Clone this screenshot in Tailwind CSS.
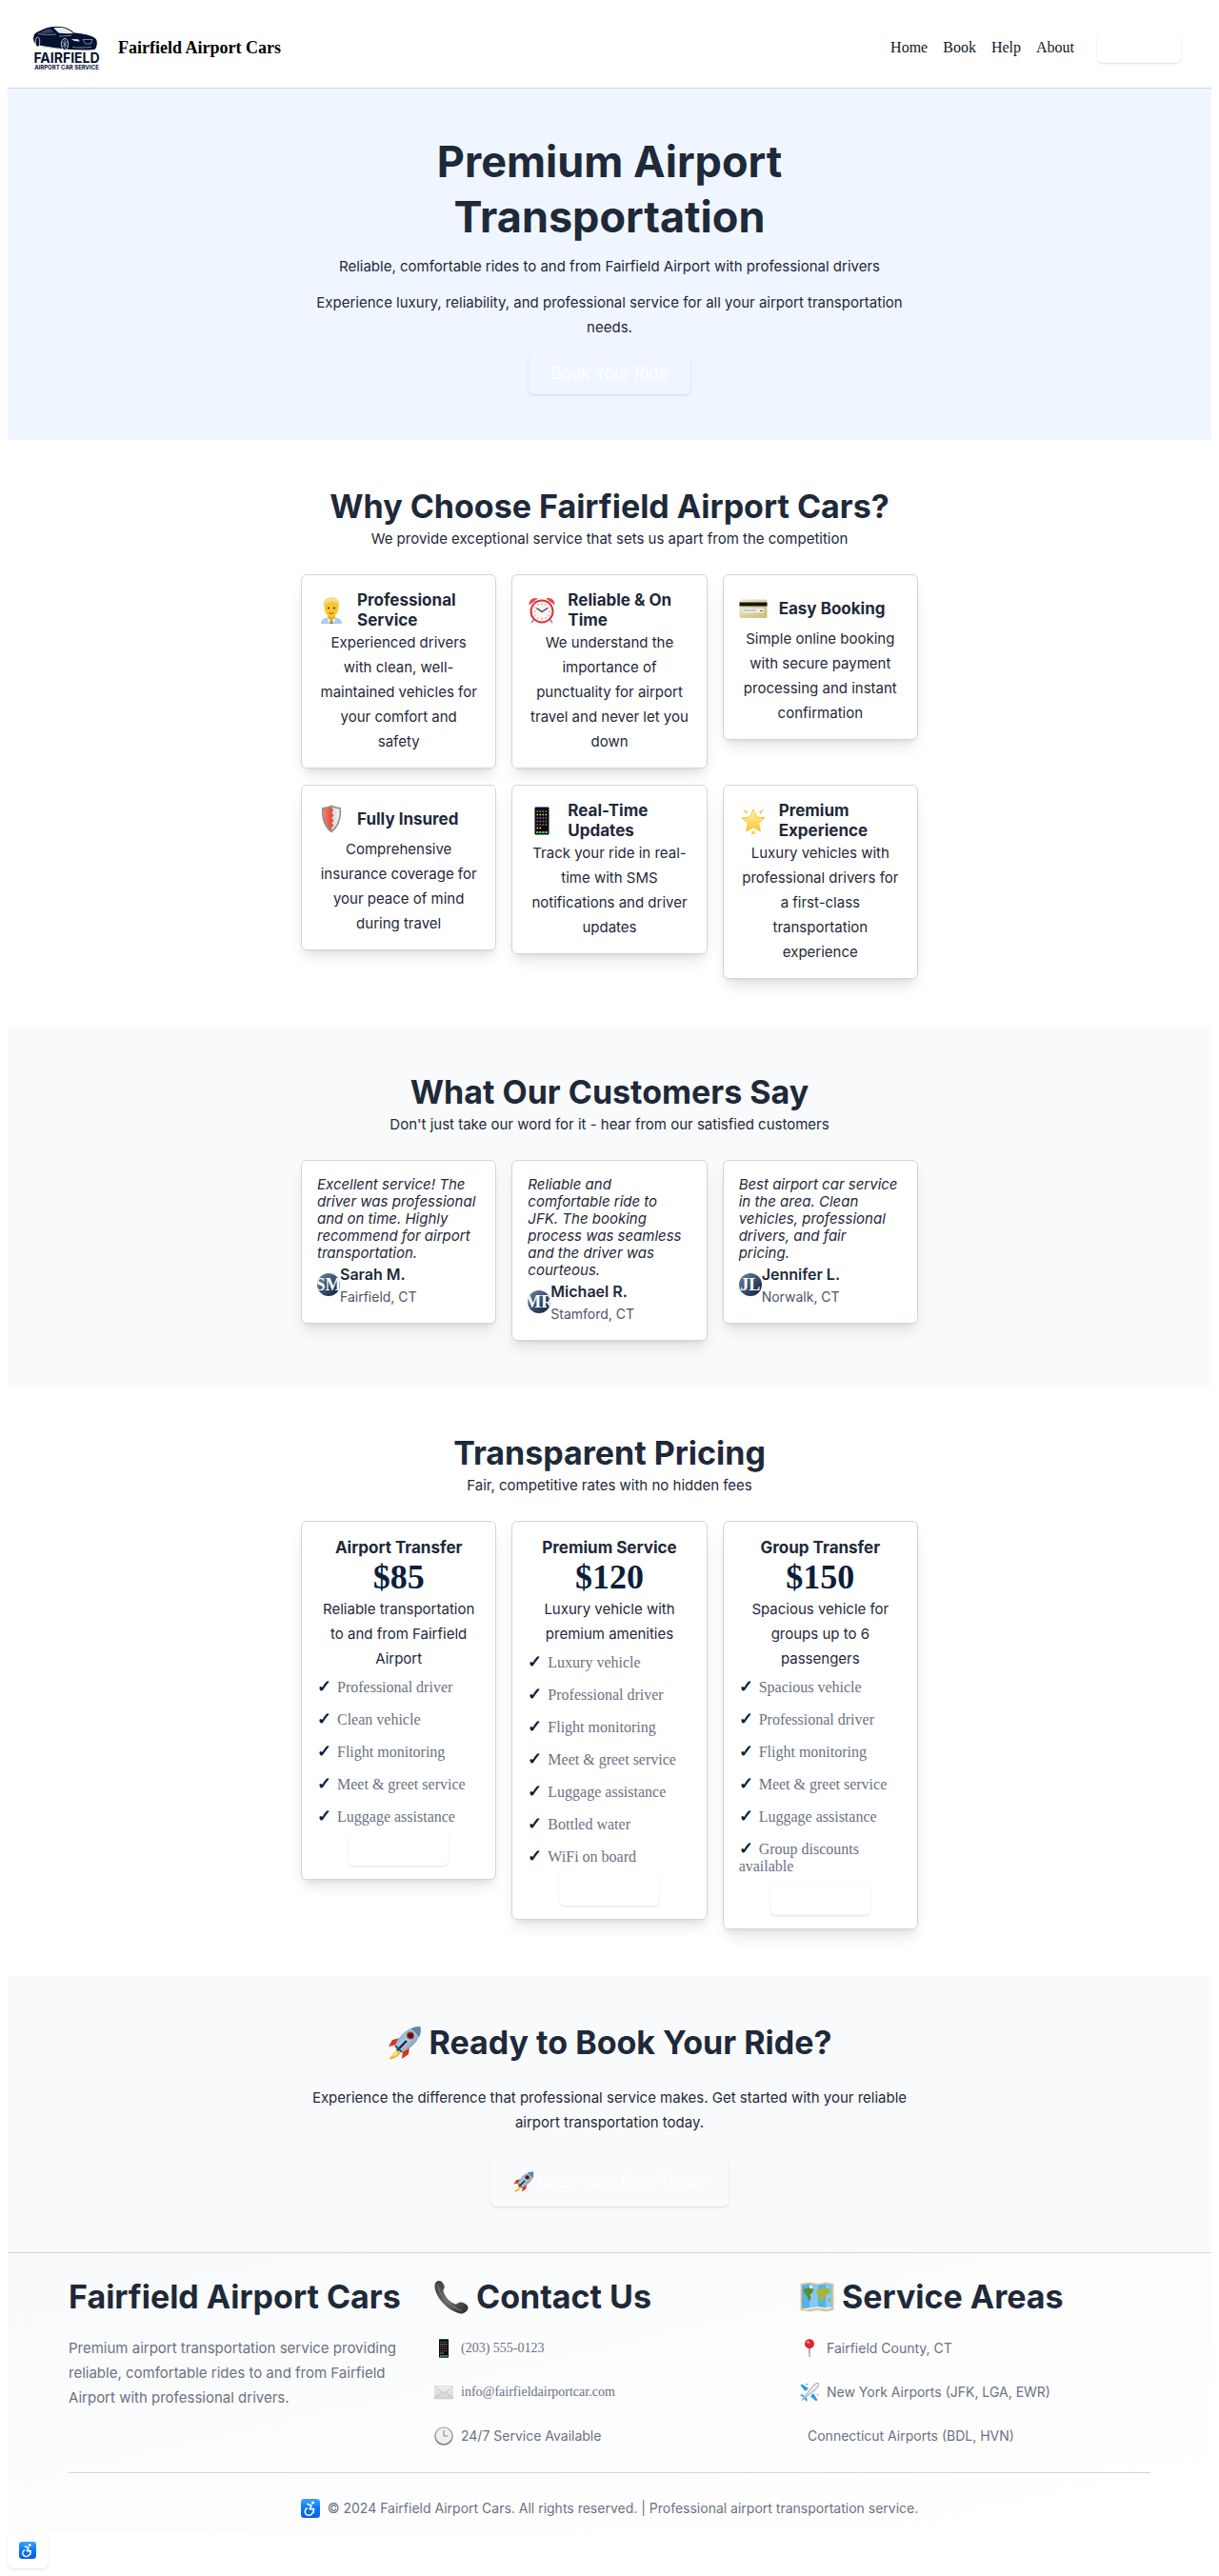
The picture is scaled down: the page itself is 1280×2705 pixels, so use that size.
<!DOCTYPE html>
<html lang="en">
<head>
<meta charset="utf-8">
<meta name="viewport" content="width=device-width, initial-scale=1">
<title>Fairfield Airport Cars</title>
<script src="https://cdn.jsdelivr.net/npm/@tailwindcss/browser@4"></script>
</head>
<body class="bg-white p-2 font-['Inter',sans-serif] text-[15px] leading-[26px] text-gray-800">

<!-- Shared icon symbols -->
<svg class="absolute size-0" aria-hidden="true">
  <defs>
    <linearGradient id="gold" x1="0" y1="0" x2="1" y2="1"><stop offset="0" stop-color="#efe9c0"/><stop offset="1" stop-color="#c9bd7c"/></linearGradient>
    <linearGradient id="steel" x1="0" y1="0" x2="1" y2="0"><stop offset="0" stop-color="#cfd3d5"/><stop offset="1" stop-color="#f4f6f6"/></linearGradient>
    <linearGradient id="redside" x1="0" y1="0" x2="1" y2="0"><stop offset="0" stop-color="#f47f6d"/><stop offset="1" stop-color="#d8412f"/></linearGradient>
    <linearGradient id="paper" x1="0" y1="0" x2="0" y2="1"><stop offset="0" stop-color="#f4f4f4"/><stop offset="1" stop-color="#d2d2d2"/></linearGradient>
    <linearGradient id="rim" x1="0" y1="0" x2="0" y2="1"><stop offset="0" stop-color="#b8bcbf"/><stop offset="1" stop-color="#77797b"/></linearGradient>
    <linearGradient id="blue" x1="0" y1="0" x2="0" y2="1"><stop offset="0" stop-color="#3fa2ff"/><stop offset="0.5" stop-color="#0a78f5"/><stop offset="1" stop-color="#0b5fe0"/></linearGradient>
    <linearGradient id="starfill" x1="0" y1="0" x2="0" y2="1"><stop offset="0" stop-color="#fff6b0"/><stop offset="1" stop-color="#fcc42c"/></linearGradient>
    <linearGradient id="handset" x1="0" y1="0" x2="1" y2="1"><stop offset="0" stop-color="#3a3a3a"/><stop offset="0.5" stop-color="#6a6a6a"/><stop offset="1" stop-color="#262626"/></linearGradient>
    <linearGradient id="hull" x1="0" y1="0" x2="1" y2="1"><stop offset="0" stop-color="#4b93cf"/><stop offset="0.5" stop-color="#b5d0e6"/><stop offset="1" stop-color="#4c5b6b"/></linearGradient>
    <symbol id="i-person" viewBox="0 0 30 30">
      <path d="M4 29c0-4 3-6 7-6.500h8c4 .5 7 2.500 7 6.500z" fill="#a9cdea"/>
      <path d="M11 22.500l4 3.500 4-3.500v-3h-8z" fill="#e8a91c"/>
      <path d="M10.500 22l4.500 4.500-3 1.500zM19.500 22L15 26.500l3 1.500z" fill="#e3f0fa"/>
      <path d="M14 25.500h2l.8 3.500h-3.600z" fill="#b98436"/>
      <path d="M7.500 11c0-5 3-8 7.500-8s7.500 3 7.500 8c0 6-3 11-7.500 11S7.500 17 7.500 11z" fill="#fbc52f"/>
      <path d="M6.500 12C5.500 5 9 1 15 1s9.500 4 8.500 11l-1.500-4c-3-2.500-11-2.500-14 0z" fill="#f3dc8c"/>
      <circle cx="12" cy="12.500" r="1.100" fill="#54371b"/><circle cx="18" cy="12.500" r="1.100" fill="#54371b"/>
      <path d="M12.500 17.500q2.500 1.700 5 0" stroke="#a2491d" fill="none"/>
    </symbol>
    <symbol id="i-alarm" viewBox="0 0 30 30">
      <path d="M7 24l-3 4M23 24l3 4" stroke="#8b8b8b" stroke-width="1.600"/>
      <path d="M1.500 9.500C1 4 6 .5 11 2.500zM28.500 9.500C29 4 24 .5 19 2.500z" fill="#e04a4f"/>
      <circle cx="15" cy="16" r="12.500" fill="#d5353c"/><circle cx="15" cy="16" r="10.500" fill="#f7f5f4"/>
      <path d="M15 7v2.500M15 22.500V25M6 16h2.500M21.500 16H24M10.500 8.200l1 1.800M19.500 8.200l-1 1.800M10.500 23.800l1-1.800M19.500 23.800l-1-1.800M7.200 11.500l1.800 1M22.800 11.500l-1.800 1M7.200 20.500l1.800-1M22.800 20.500l-1.800-1" stroke="#e88b8b" stroke-width=".9"/>
      <path d="M9.500 12.500L15 16.500l6-4" stroke="#333" stroke-width="1.200" fill="none"/>
    </symbol>
    <symbol id="i-card" viewBox="0 0 30 30">
      <rect x=".5" y="5.500" width="29" height="19.500" rx="1.500" fill="url(#gold)"/>
      <rect x=".5" y="8.500" width="29" height="4" fill="#151515"/>
      <rect x="3" y="15" width="23" height="4.500" fill="#f1efe2"/>
      <path d="M4.500 17.800l1.500-1.500 1 1.500 2-1.500 1 1.500 2-1.500 1 1 2-1 1 1.500 2-1.500" stroke="#6c8bd0" stroke-width=".8" fill="none"/>
      <path d="M22 17.500h3" stroke="#555"/>
    </symbol>
    <symbol id="i-shield" viewBox="0 0 30 30">
      <path d="M15 .5c4 1.500 7 2.200 10 2.500 1 11-2 21-10 26.500C7 24 4 14 5 3c3-.3 6-1 10-2.500z" fill="#8e9698"/>
      <path d="M15 2.500c3 1.200 5.500 1.700 8.300 2C24 14 21.500 22 15 27z" fill="url(#steel)"/>
      <path d="M15 2.500C12 3.700 9.500 4.200 6.700 4.500 6 14 8.500 22 15 27v-3l2.500-2.500L15 19.500l2.500-3L15 14l2.500-3L15 8.500 17 6z" fill="url(#redside)"/>
    </symbol>
    <symbol id="i-phone" viewBox="0 0 30 30">
      <rect x="7.500" y=".5" width="15" height="29" rx="1" fill="#0b0b0b"/>
      <path d="M9.500 5h11" stroke="#44b3c9" stroke-width="1.600" stroke-dasharray="1.600 1.400"/>
      <path d="M9.500 8.500h11" stroke="#e9dc6a" stroke-width="1.600" stroke-dasharray="1.600 1.400"/>
      <path d="M9.500 12h11" stroke="#d04fb1" stroke-width="1.600" stroke-dasharray="1.600 1.400"/>
      <path d="M9.500 15.500h11" stroke="#4f86e0" stroke-width="1.600" stroke-dasharray="1.600 1.400"/>
      <path d="M9.500 19h11" stroke="#d9693f" stroke-width="1.600" stroke-dasharray="1.600 1.400"/>
      <path d="M9.500 22.500h5" stroke="#e8e8e8" stroke-width="1.600" stroke-dasharray="1.600 1.400"/>
      <path d="M9 27h12" stroke="#4fd66b" stroke-width="2.200" stroke-dasharray="2.300 .9"/>
    </symbol>
    <symbol id="i-star" viewBox="0 0 30 30">
      <path d="M15 3l3.500 8 8.500.8-6.500 5.700 2 8.500-7.500-4.500L7.500 26l2-8.500L3 11.800l8.500-.8z" fill="url(#starfill)" stroke="#f5b81f" stroke-width=".8" stroke-linejoin="round"/>
      <path d="M4 3l5 2-1.500 3zM26 3l-5 2 1.500 3zM15 24.500l2.500 4.500h-5z" fill="#fbc845"/>
    </symbol>
    <symbol id="i-rocket" viewBox="0 0 36 36">
      <path d="M10 25L1.500 35c5 0 9-2 11.500-6z" fill="#f8a51b"/><path d="M9 27l-5 6c4-.5 6-2 7-4z" fill="#fdee6a"/>
      <path d="M14 13L5 15 1 22l9-2zM23 22l-1 8-7 5 1-9z" fill="#e52d18"/>
      <path d="M9 27L8 20C13 9 22 1 34.500 1 36 12 28 22 16 28z" fill="url(#hull)"/>
      <path d="M34.500 1c-4 0-7 .8-10 2l9 9c1-3.500 1.400-7 1-11z" fill="#5f86a8"/>
      <circle cx="24" cy="10.500" r="4" fill="#c8261d"/><circle cx="24" cy="10.500" r="2.600" fill="#20262e"/>
      <path d="M10 26L20 16" stroke="#1c2530" stroke-width="2.400"/>
      <path d="M8 21l7 7" stroke="#47525e" stroke-width="2"/>
    </symbol>
    <symbol id="i-handset" viewBox="0 0 36 36">
      <path d="M3 1.500C6 0 9 2 10.500 6c1 3-1.500 4-1 6 1.500 6 7 11.500 12.500 13.500 2 .5 3.500-2.500 6-2 4 .7 8 3 7.500 6-.5 3.500-4 6-7.500 6C16 34 1 19 .5 7 .4 4.500 1 2.500 3 1.500z" fill="url(#handset)"/>
      <path d="M3.500 5C5 15 15 28 29 32.500" stroke="#a5a5a5" stroke-width="1" fill="none" opacity=".6"/>
    </symbol>
    <symbol id="i-map" viewBox="0 0 36 36">
      <path d="M.5 4L10 2.500l9 1.500 8-1.500L35.500 4v28L27 33.500 19 32l-9 1.500L.5 32z" fill="#e0c49a"/>
      <path d="M2 5.500l8-1.200 9 1.500 8-1.500 7 1.200v24l-7 1.500-8-1.500-9 1.500-8-1.500z" fill="#55b2e6"/>
      <path d="M10 4.300l9 1.500v23.700l-9 1.500zM27 4.300l7 1.200v24L27 31z" fill="#84c9ef"/>
      <path d="M3.500 10l6-2 5 2-2 4-2 1 1 4-1.500 4-2-5-3-4z" fill="#5d8a2c"/>
      <path d="M17.500 11l5-2.500 8 .5 2 3-4 4-3 1-1.500 6-3-1-1-5-2.500-1z" fill="#a9b53a"/>
      <path d="M29 20l3-.5.5 2.500-2.500 1z" fill="#e29a35"/><path d="M10 6l3 .2v3l-3-.5z" fill="#eaf2f5"/>
      <path d="M4 31l6-1 9-1 8 1 6-1" stroke="#f2f2ec" stroke-width="1.500" fill="none"/>
    </symbol>
    <symbol id="i-mail" viewBox="0 0 20 20">
      <rect x=".4" y="3.500" width="19.200" height="13.500" rx=".6" fill="url(#paper)" stroke="#cfcfcf" stroke-width=".6"/>
      <path d="M.8 4l9.200 8 9.200-8M1 16.500L7.500 10M19 16.500L12.500 10" stroke="#b2b2b2" stroke-width=".8" fill="none"/>
    </symbol>
    <symbol id="i-clock" viewBox="0 0 20 20">
      <circle cx="10" cy="10" r="9.800" fill="url(#rim)"/><circle cx="10" cy="10" r="8.300" fill="#f1f1f0"/>
      <path d="M10 4v6h4.500" stroke="#8a8a8a" stroke-width="1.100" fill="none"/>
    </symbol>
    <symbol id="i-pin" viewBox="0 0 20 20">
      <path d="M9.300 8h1.400l-.3 11h-.8z" fill="#8a6f66"/><circle cx="10" cy="5.300" r="5" fill="#e0262c"/><circle cx="8.600" cy="3.600" r="1.500" fill="#ff8d8a"/>
    </symbol>
    <symbol id="i-plane" viewBox="0 0 20 20">
      <path d="M9 6L2 1.500.5 3l5 6zM14 11l4.500 7-1.500 1.500-6-5zM4.500 13l-3.500-.8-.8.900 3 2.500zM7 15.500l.8 3.500-.9.800-2.500-3z" fill="#2f9fe0"/>
      <path d="M2 18.500L13.500 3.500C15.500 1.200 18.500 0 19.500.5s0 3.500-2.500 6z" fill="#e9edf0" stroke="#7c868e" stroke-width=".8"/>
      <path d="M6 2l1.500-1 1 1.500zM18 13l1-1.500.3 2z" fill="#54616b"/>
    </symbol>
    <symbol id="i-access" viewBox="0 0 20 20">
      <rect width="20" height="20" rx="3.500" fill="url(#blue)"/>
      <circle cx="12.500" cy="4" r="1.600" fill="#fff"/>
      <path d="M7 5.500l4 1.500-1.800 3.700h4.300l-.5 4" stroke="#fff" stroke-width="1.700" fill="none" stroke-linejoin="round" stroke-linecap="round"/>
      <path d="M6.300 9.800a4 4 0 1 0 5.500 5.300" stroke="#fff" stroke-width="1.500" fill="none" stroke-linecap="round"/>
    </symbol>
  </defs>
</svg>

<header class="flex items-center justify-between border-b border-gray-300 bg-white px-6 py-[18px] pr-8">
  <a href="#" class="flex items-center gap-4">
    <svg class="h-12 w-[76px]" viewBox="0 0 76 48" role="img" aria-label="Fairfield Airport Car Service">
      <path d="M4 10C7 7 11 6 14 4.500 19 2 24 1.800 31 2c6 .3 10 2.500 15 6.500 9 .8 17 2.500 21 5 2.500 1.500 3 3.500 2.800 6.500-.2 3-1.300 5-2 5.700-8 1.300-18 .8-27 .3-9-.8-20-2.500-31.500-4.500C4.500 21 3 17 3 14z" fill="#04122f"/>
      <path d="M24 3.500c5-.7 11-.5 14 1 3 1.200 5.500 3 7 4.500-5 .3-10 .3-15-.2-2-1.800-3.500-3.500-6-5.300z" fill="#e6ebef"/>
      <path d="M10 8.500c3-2.500 7-4 11-4.600l4 4.400c-5 .6-10 .6-15 .2z" fill="#33435f"/>
      <path d="M8 9.500c6 1 13 1.200 19 .5M30 12c5 0 9-.3 13-.8M12 23l18 2.300M44 23.500c6 .8 14 .8 20-.3" stroke="#aab4c4" stroke-width=".7" fill="none"/>
      <path d="M43 15l7 .3 2 2.200-6-.5zM40 12.500l3 3" fill="#dfe5ec"/>
      <path d="M55 15.500h10l-1.500 4.500h-6z" fill="none" stroke="#aab4c4" stroke-width=".7"/>
      <ellipse cx="36" cy="20.500" rx="3.600" ry="6" fill="#04122f" stroke="#dfe5ec" stroke-width=".9"/>
      <path d="M36 16v9M33.500 18l5 5M38.500 18l-5 5" stroke="#dfe5ec" stroke-width=".7"/>
      <ellipse cx="7.500" cy="18" rx="2.200" ry="5" fill="#04122f" stroke="#dfe5ec" stroke-width=".8"/>
      <text x="38" y="40" text-anchor="middle" font-family="Inter, sans-serif" font-weight="700" font-size="14" fill="#04122f">FAIRFIELD</text>
      <text x="38" y="47" text-anchor="middle" font-family="Inter, sans-serif" font-weight="700" font-size="6" fill="#04122f">AIRPORT CAR SERVICE</text>
    </svg>
    <span class="font-['Liberation_Serif',serif] text-lg font-bold text-black">Fairfield Airport Cars</span>
  </a>
  <nav class="flex items-center gap-4 font-['Liberation_Serif',serif] text-base text-gray-900">
    <a href="#">Home</a>
    <a href="#">Book</a>
    <a href="#">Help</a>
    <a href="#">About</a>
    <button class="ml-2 h-8 w-[88px] rounded-md bg-white font-['Inter',sans-serif] text-sm text-white shadow-sm">Book Now</button>
  </nav>
</header>

<main>
  <section class="bg-[#eff6ff] px-4 py-12 text-center">
    <div class="mx-auto max-w-[648px]">
      <h1 class="text-[45px] leading-[58px] font-bold">Premium Airport Transportation</h1>
      <p class="mt-2.5">Reliable, comfortable rides to and from Fairfield Airport with professional drivers</p>
      <p class="mt-3">Experience luxury, reliability, and professional service for all your airport transportation needs.</p>
      <button class="mt-3 h-[45px] rounded-md px-6 text-[17px] text-white shadow-sm">Book Your Ride</button>
    </div>
  </section>

  <section class="px-4 pt-12 pb-[49px]">
    <div class="mx-auto max-w-[648px]">
      <h2 class="text-center text-[34px] leading-[43px] font-bold">Why Choose Fairfield Airport Cars?</h2>
      <p class="text-center">We provide exceptional service that sets us apart from the competition</p>
      <div class="mt-6 grid grid-cols-3 items-start gap-x-4 gap-y-[17px]">
        <article class="rounded-md border border-gray-300 bg-white px-4 pt-4 pb-3.5 text-center shadow-lg">
          <div class="flex min-h-[38px] items-center gap-3 text-left">
            <svg class="size-[30px] shrink-0" aria-hidden="true"><use href="#i-person"/></svg>
            <h3 class="text-[17px] leading-[21px] font-bold">Professional Service</h3>
          </div>
          <p>Experienced drivers with clean, well-maintained vehicles for your comfort and<br>safety</p>
        </article>
        <article class="rounded-md border border-gray-300 bg-white px-4 pt-4 pb-3.5 text-center shadow-lg">
          <div class="flex min-h-[38px] items-center gap-3 text-left">
            <svg class="size-[30px] shrink-0" aria-hidden="true"><use href="#i-alarm"/></svg>
            <h3 class="text-[17px] leading-[21px] font-bold">Reliable &amp; On<br>Time</h3>
          </div>
          <p>We understand the importance of punctuality for airport travel and never let you down</p>
        </article>
        <article class="rounded-md border border-gray-300 bg-white px-4 pt-4 pb-3.5 text-center shadow-lg">
          <div class="flex min-h-[38px] items-center gap-3 text-left">
            <svg class="size-[30px] shrink-0" aria-hidden="true"><use href="#i-card"/></svg>
            <h3 class="text-[17px] leading-[21px] font-bold">Easy Booking</h3>
          </div>
          <p>Simple online booking with secure payment processing and instant confirmation</p>
        </article>
        <article class="rounded-md border border-gray-300 bg-white px-4 pt-4 pb-3.5 text-center shadow-lg">
          <div class="flex min-h-[38px] items-center gap-3 text-left">
            <svg class="size-[30px] shrink-0" aria-hidden="true"><use href="#i-shield"/></svg>
            <h3 class="text-[17px] leading-[21px] font-bold">Fully Insured</h3>
          </div>
          <p>Comprehensive insurance coverage for your peace of mind during travel</p>
        </article>
        <article class="rounded-md border border-gray-300 bg-white px-4 pt-4 pb-3.5 text-center shadow-lg">
          <div class="flex min-h-[38px] items-center gap-3 text-left">
            <svg class="size-[30px] shrink-0" aria-hidden="true"><use href="#i-phone"/></svg>
            <h3 class="text-[17px] leading-[21px] font-bold">Real-Time Updates</h3>
          </div>
          <p>Track your ride in real-time with SMS notifications and driver updates</p>
        </article>
        <article class="rounded-md border border-gray-300 bg-white px-4 pt-4 pb-3.5 text-center shadow-lg">
          <div class="flex min-h-[38px] items-center gap-3 text-left">
            <svg class="size-[30px] shrink-0" aria-hidden="true"><use href="#i-star"/></svg>
            <h3 class="text-[17px] leading-[21px] font-bold">Premium Experience</h3>
          </div>
          <p>Luxury vehicles with professional drivers for a first-class transportation experience</p>
        </article>
      </div>
    </div>
  </section>

  <section class="bg-[#f9fafb] px-4 py-12">
    <div class="mx-auto max-w-[648px]">
      <h2 class="text-center text-[34px] leading-[43px] font-bold">What Our Customers Say</h2>
      <p class="text-center">Don't just take our word for it - hear from our satisfied customers</p>
      <div class="mt-6 grid grid-cols-3 items-start gap-4">
        <article class="rounded-md border border-gray-300 bg-white p-4 shadow-lg">
          <blockquote class="leading-[18px] italic">Excellent service! The driver was professional and on time. Highly recommend for airport transportation.</blockquote>
          <div class="flex items-center">
            <span class="flex size-6 items-center justify-center overflow-hidden rounded-full bg-linear-to-br from-[#6f89a8] to-[#0b1f3a] font-['Liberation_Serif',serif] text-lg font-semibold text-white">SM</span>
            <div>
              <p class="text-base leading-[26px] font-semibold">Sarah M.</p>
              <p class="text-sm leading-[22px] text-gray-600">Fairfield, CT</p>
            </div>
          </div>
        </article>
        <article class="rounded-md border border-gray-300 bg-white p-4 shadow-lg">
          <blockquote class="leading-[18px] italic">Reliable and comfortable ride to JFK. The booking process was seamless and the driver was courteous.</blockquote>
          <div class="flex items-center">
            <span class="flex size-6 items-center justify-center overflow-hidden rounded-full bg-linear-to-br from-[#6f89a8] to-[#0b1f3a] font-['Liberation_Serif',serif] text-lg font-semibold text-white">MR</span>
            <div>
              <p class="text-base leading-[26px] font-semibold">Michael R.</p>
              <p class="text-sm leading-[22px] text-gray-600">Stamford, CT</p>
            </div>
          </div>
        </article>
        <article class="rounded-md border border-gray-300 bg-white p-4 shadow-lg">
          <blockquote class="leading-[18px] italic">Best airport car service in the area. Clean vehicles, professional drivers, and fair<br>pricing.</blockquote>
          <div class="flex items-center">
            <span class="flex size-6 items-center justify-center overflow-hidden rounded-full bg-linear-to-br from-[#6f89a8] to-[#0b1f3a] font-['Liberation_Serif',serif] text-lg font-semibold text-white">JL</span>
            <div>
              <p class="text-base leading-[26px] font-semibold">Jennifer L.</p>
              <p class="text-sm leading-[22px] text-gray-600">Norwalk, CT</p>
            </div>
          </div>
        </article>
      </div>
    </div>
  </section>

  <section class="px-4 pt-12 pb-[49px]">
    <div class="mx-auto max-w-[648px]">
      <h2 class="text-center text-[34px] leading-[43px] font-bold">Transparent Pricing</h2>
      <p class="text-center">Fair, competitive rates with no hidden fees</p>
      <div class="mt-6 grid grid-cols-3 items-start gap-4">
        <article class="rounded-md border border-gray-300 bg-white px-4 pt-4 pb-3.5 text-center shadow-lg">
          <h3 class="text-[17px] leading-[22px] font-bold">Airport Transfer</h3>
          <p class="font-['Liberation_Serif',serif] text-4xl leading-[41px] font-bold text-[#0b1f3a]">$85</p>
          <p>Reliable transportation to and from Fairfield Airport</p>
          <ul class="text-left font-['Liberation_Serif',serif] text-base leading-[18px] text-gray-500">
            <li class="py-2"><span class="mr-1.5 text-lg leading-3 font-bold text-[#0b1f3a]">✓</span>Professional driver</li>
            <li class="py-2"><span class="mr-1.5 text-lg leading-3 font-bold text-[#0b1f3a]">✓</span>Clean vehicle</li>
            <li class="py-2"><span class="mr-1.5 text-lg leading-3 font-bold text-[#0b1f3a]">✓</span>Flight monitoring</li>
            <li class="py-2"><span class="mr-1.5 text-lg leading-3 font-bold text-[#0b1f3a]">✓</span>Meet &amp; greet service</li>
            <li class="py-2"><span class="mr-1.5 text-lg leading-3 font-bold text-[#0b1f3a]">✓</span>Luggage assistance</li>
          </ul>
          <button class="mx-auto block h-[34px] w-[105px] rounded-md bg-white text-sm text-white shadow-sm">Book Now</button>
        </article>
        <article class="rounded-md border border-gray-300 bg-white px-4 pt-4 pb-3.5 text-center shadow-lg">
          <h3 class="text-[17px] leading-[22px] font-bold">Premium Service</h3>
          <p class="font-['Liberation_Serif',serif] text-4xl leading-[41px] font-bold text-[#0b1f3a]">$120</p>
          <p>Luxury vehicle with premium amenities</p>
          <ul class="text-left font-['Liberation_Serif',serif] text-base leading-[18px] text-gray-500">
            <li class="py-2"><span class="mr-1.5 text-lg leading-3 font-bold text-[#0b1f3a]">✓</span>Luxury vehicle</li>
            <li class="py-2"><span class="mr-1.5 text-lg leading-3 font-bold text-[#0b1f3a]">✓</span>Professional driver</li>
            <li class="py-2"><span class="mr-1.5 text-lg leading-3 font-bold text-[#0b1f3a]">✓</span>Flight monitoring</li>
            <li class="py-2"><span class="mr-1.5 text-lg leading-3 font-bold text-[#0b1f3a]">✓</span>Meet &amp; greet service</li>
            <li class="py-2"><span class="mr-1.5 text-lg leading-3 font-bold text-[#0b1f3a]">✓</span>Luggage assistance</li>
            <li class="py-2"><span class="mr-1.5 text-lg leading-3 font-bold text-[#0b1f3a]">✓</span>Bottled water</li>
            <li class="py-2"><span class="mr-1.5 text-lg leading-3 font-bold text-[#0b1f3a]">✓</span>WiFi on board</li>
          </ul>
          <button class="mx-auto block h-[34px] w-[105px] rounded-md bg-white text-sm text-white shadow-sm">Book Now</button>
        </article>
        <article class="rounded-md border border-gray-300 bg-white px-4 pt-4 pb-3.5 text-center shadow-lg">
          <h3 class="text-[17px] leading-[22px] font-bold">Group Transfer</h3>
          <p class="font-['Liberation_Serif',serif] text-4xl leading-[41px] font-bold text-[#0b1f3a]">$150</p>
          <p>Spacious vehicle for groups up to 6 passengers</p>
          <ul class="text-left font-['Liberation_Serif',serif] text-base leading-[18px] text-gray-500">
            <li class="py-2"><span class="mr-1.5 text-lg leading-3 font-bold text-[#0b1f3a]">✓</span>Spacious vehicle</li>
            <li class="py-2"><span class="mr-1.5 text-lg leading-3 font-bold text-[#0b1f3a]">✓</span>Professional driver</li>
            <li class="py-2"><span class="mr-1.5 text-lg leading-3 font-bold text-[#0b1f3a]">✓</span>Flight monitoring</li>
            <li class="py-2"><span class="mr-1.5 text-lg leading-3 font-bold text-[#0b1f3a]">✓</span>Meet &amp; greet service</li>
            <li class="py-2"><span class="mr-1.5 text-lg leading-3 font-bold text-[#0b1f3a]">✓</span>Luggage assistance</li>
            <li class="py-2"><span class="mr-1.5 text-lg leading-3 font-bold text-[#0b1f3a]">✓</span>Group discounts available</li>
          </ul>
          <button class="mx-auto block h-[34px] w-[105px] rounded-md bg-white text-sm text-white shadow-sm">Book Now</button>
        </article>
      </div>
    </div>
  </section>

  <section class="bg-[#f9fafb] px-4 py-12 text-center">
    <div class="mx-auto max-w-[648px]">
      <h2 class="flex items-center justify-center gap-2 text-[34px] leading-[43px] font-bold">
        <svg class="size-9" aria-hidden="true"><use href="#i-rocket"/></svg>Ready to Book Your Ride?
      </h2>
      <p class="mt-6">Experience the difference that professional service makes. Get started with your reliable airport transportation today.</p>
      <button class="mx-auto mt-[22px] flex h-[53px] items-center gap-1 rounded-md px-6 text-[17px] text-white shadow-sm">
        <svg class="size-[22px]" aria-hidden="true"><use href="#i-rocket"/></svg>Book Your Ride Today
      </button>
    </div>
  </section>
</main>

<footer class="border-t border-gray-300 bg-linear-to-br from-[#f9fafb] to-white px-8 pt-6 pb-3">
  <div class="mx-auto max-w-[1136px]">
    <div class="grid grid-cols-3 gap-4 pb-[25px]">
      <section>
        <h3 class="text-[34px] leading-[43px] font-bold">Fairfield Airport Cars</h3>
        <p class="mt-5 text-gray-500">Premium airport transportation service providing reliable, comfortable rides to and from Fairfield Airport with professional drivers.</p>
      </section>
      <section>
        <h3 class="flex items-center gap-2 text-[34px] leading-[43px] font-bold">
          <svg class="size-9" aria-hidden="true"><use href="#i-handset"/></svg>Contact Us
        </h3>
        <ul class="mt-5 flex flex-col gap-5 text-sm leading-[26px] text-gray-500">
          <li class="flex items-center gap-2"><svg class="size-5" aria-hidden="true"><use href="#i-phone"/></svg><a href="tel:2035550123" class="font-['Liberation_Serif',serif]">(203) 555-0123</a></li>
          <li class="flex items-center gap-2"><svg class="size-5" aria-hidden="true"><use href="#i-mail"/></svg><a href="mailto:info@fairfieldairportcar.com" class="font-['Liberation_Serif',serif]">info@fairfieldairportcar.com</a></li>
          <li class="flex items-center gap-2"><svg class="size-5" aria-hidden="true"><use href="#i-clock"/></svg>24/7 Service Available</li>
        </ul>
      </section>
      <section>
        <h3 class="flex items-center gap-2 text-[34px] leading-[43px] font-bold">
          <svg class="size-9" aria-hidden="true"><use href="#i-map"/></svg>Service Areas
        </h3>
        <ul class="mt-5 flex flex-col gap-5 text-sm leading-[26px] text-gray-500">
          <li class="flex items-center gap-2"><svg class="size-5" aria-hidden="true"><use href="#i-pin"/></svg>Fairfield County, CT</li>
          <li class="flex items-center gap-2"><svg class="size-5" aria-hidden="true"><use href="#i-plane"/></svg>New York Airports (JFK, LGA, EWR)</li>
          <li class="pl-2">Connecticut Airports (BDL, HVN)</li>
        </ul>
      </section>
    </div>
    <p class="flex items-center justify-center gap-2 border-t border-gray-300 pt-6 text-sm leading-[26px] text-gray-500">
      <svg class="size-5 shrink-0" aria-hidden="true"><use href="#i-access"/></svg>© 2024 Fairfield Airport Cars. All rights reserved. | Professional airport transportation service.
    </p>
  </div>
</footer>

<button aria-label="Accessibility options" class="flex h-[38px] w-[42px] items-center justify-center rounded-md bg-white shadow-sm">
  <svg class="size-[18px]" aria-hidden="true"><use href="#i-access"/></svg>
</button>

</body>
</html>
